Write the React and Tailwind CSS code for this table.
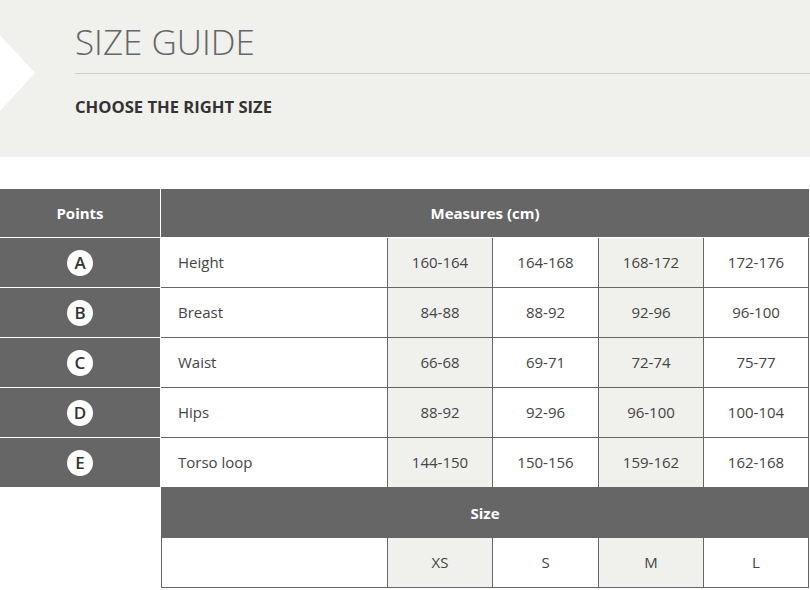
import React from 'react';

const rows = [
  { key: 'A', label: 'Height', values: ['160-164', '164-168', '168-172', '172-176'] },
  { key: 'B', label: 'Breast', values: ['84-88', '88-92', '92-96', '96-100'] },
  { key: 'C', label: 'Waist', values: ['66-68', '69-71', '72-74', '75-77'] },
  { key: 'D', label: 'Hips', values: ['88-92', '92-96', '96-100', '100-104'] },
  { key: 'E', label: 'Torso loop', values: ['144-150', '150-156', '159-162', '162-168'] },
];

const sizes = ['XS', 'S', 'M', 'L'];
const colWidths = ['w-[105px]', 'w-[106px]', 'w-[105px]', 'w-[105px]'];
const colBg = ['bg-[#f0f0ec]', 'bg-white', 'bg-[#f0f0ec]', 'bg-white'];

const ValueCells = ({ values }) => (
  <>
    {values.map((v, i) => (
      <div
        key={i}
        className={`${colWidths[i]} ${colBg[i]} border-l border-[#666] flex items-center justify-center`}
      >
        {v}
      </div>
    ))}
  </>
);

export default function App() {
  return (
    <div className="w-[810px] h-[590px] bg-white overflow-hidden text-[#444]" style={{ fontFamily: '"Open Sans", "Liberation Sans", sans-serif' }}>
      {/* Header band */}
      <div className="relative h-[157px] bg-[#f0f0ec] pl-[75px] pt-[20px]">
        <div className="absolute left-0 top-[35px] w-0 h-0 border-t-[38px] border-b-[38px] border-l-[35px] border-t-transparent border-b-transparent border-l-white" />
        <h1 className="text-[35px] font-light text-[#666] leading-[44px]">SIZE GUIDE</h1>
        <div className="mt-[9px] h-px bg-[#cfcfcb]" />
        <p className="mt-[22px] text-[16.6px] font-bold text-[#333] leading-[22px]">CHOOSE THE RIGHT SIZE</p>
      </div>

      {/* Table */}
      <div className="mt-[32px] w-[809px] text-[15px]">
        <div className="flex h-[49px] border-b border-white">
          <div className="w-[160px] bg-[#666] text-white font-bold flex items-center justify-center">Points</div>
          <div className="ml-px flex-1 bg-[#666] text-white font-bold flex items-center justify-center">Measures (cm)</div>
        </div>

        {rows.map((r) => (
          <div key={r.key} className="flex h-[50px]">
            <div className="w-[160px] bg-[#666] border-b border-white flex items-center justify-center">
              <span className="w-[26px] h-[26px] rounded-full bg-white text-[#333] text-[17px] font-semibold flex items-center justify-center leading-none">
                {r.key}
              </span>
            </div>
            <div className="ml-px flex flex-1 border-b border-r border-[#666]">
              <div className="w-[226px] flex items-center pl-[17px]">{r.label}</div>
              <ValueCells values={r.values} />
            </div>
          </div>
        ))}

        <div className="flex h-[50px]">
          <div className="w-[160px]" />
          <div className="ml-px flex-1 bg-[#666] text-white font-bold flex items-center justify-center">Size</div>
        </div>
        <div className="flex h-[50px]">
          <div className="w-[160px]" />
          <div className="ml-px flex flex-1 border border-t-0 border-[#666]">
            <div className="w-[225px]" />
            <ValueCells values={sizes} />
          </div>
        </div>
      </div>
    </div>
  );
}
